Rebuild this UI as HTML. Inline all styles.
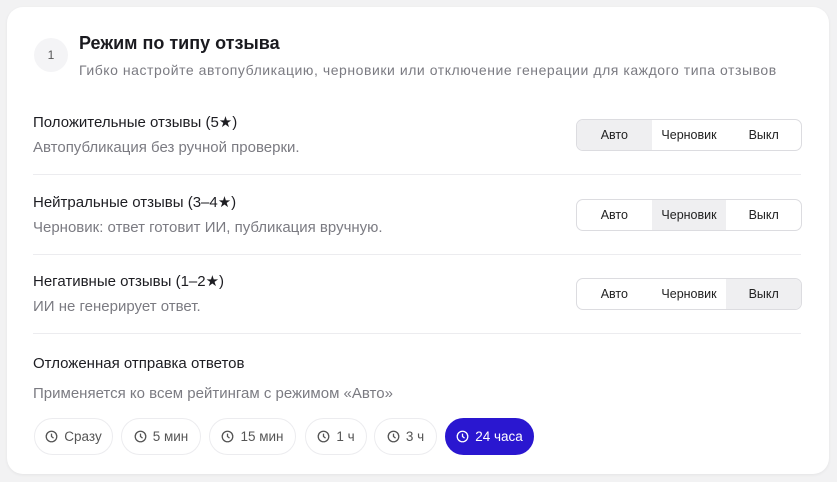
<!DOCTYPE html>
<html><head><meta charset="utf-8"><style>
*{margin:0;padding:0;box-sizing:border-box}
body{width:837px;height:482px;background:#f2f2f3;font-family:"Liberation Sans","DejaVu Sans",sans-serif;position:relative;overflow:hidden;color:#1d1d22}
.card{position:absolute;left:7px;top:7px;width:822px;height:467px;background:#fff;border-radius:16px;box-shadow:0 1px 3px rgba(0,0,0,.06)}
.a{position:absolute;white-space:nowrap}
.num{left:34px;top:38px;width:34px;height:34px;border-radius:50%;background:#f4f4f6;font-size:12px;color:#555;text-align:center;line-height:34px}
.t{font-size:18px;font-weight:bold;color:#1a1a1f;left:79px;top:33px}
.sub{font-size:14px;letter-spacing:0.55px;color:#7b7b82;left:79px;top:62px}
.h{font-size:15px;color:#1d1d22;left:33px}
.d{font-size:15px;color:#7b7b82;left:33px}
.line{position:absolute;left:33px;width:768px;height:1px;background:#ececef}
.seg{position:absolute;left:576px;width:226px;height:32px;border:1px solid #dcdce0;border-radius:7px;display:flex;overflow:hidden}
.seg div{flex:1;font-size:12.5px;text-align:center;line-height:30px;color:#222}
.seg .on{background:#efeff1}
.pill{position:absolute;top:418px;height:37px;border:1px solid #ececef;border-radius:19px;font-size:13.5px;color:#555;display:flex;align-items:center;justify-content:center;gap:6px}
.pill svg{width:13px;height:13px}
.pill.on{background:#2a17d0;border-color:#2a17d0;color:#fff}
</style></head><body>
<div class="card"></div>
<div class="a num">1</div>
<div class="a t">Режим по типу отзыва</div>
<div class="a sub">Гибко настройте автопубликацию, черновики или отключение генерации для каждого типа отзывов</div>

<div class="a h" style="top:113px">Положительные отзывы (5★)</div>
<div class="a d" style="top:139px">Автопубликация без ручной проверки.</div>
<div class="seg" style="top:119px"><div class="on">Авто</div><div>Черновик</div><div>Выкл</div></div>
<div class="line" style="top:174px"></div>

<div class="a h" style="top:193px">Нейтральные отзывы (3–4★)</div>
<div class="a d" style="top:219px">Черновик: ответ готовит ИИ, публикация вручную.</div>
<div class="seg" style="top:199px"><div>Авто</div><div class="on">Черновик</div><div>Выкл</div></div>
<div class="line" style="top:254px"></div>

<div class="a h" style="top:272px">Негативные отзывы (1–2★)</div>
<div class="a d" style="top:298px">ИИ не генерирует ответ.</div>
<div class="seg" style="top:278px"><div>Авто</div><div>Черновик</div><div class="on">Выкл</div></div>
<div class="line" style="top:333px"></div>

<div class="a h" style="top:355px">Отложенная отправка ответов</div>
<div class="a d" style="top:385px">Применяется ко всем рейтингам с режимом «Авто»</div>

<div class="pill" style="left:34px;width:79px"><svg viewBox="0 0 16 16" fill="none" stroke="currentColor" stroke-width="1.6"><circle cx="8" cy="8" r="6.5"/><path d="M8 4.5V8l2.5 2"/></svg>Сразу</div>
<div class="pill" style="left:121px;width:80px"><svg viewBox="0 0 16 16" fill="none" stroke="currentColor" stroke-width="1.6"><circle cx="8" cy="8" r="6.5"/><path d="M8 4.5V8l2.5 2"/></svg>5 мин</div>
<div class="pill" style="left:209px;width:87px"><svg viewBox="0 0 16 16" fill="none" stroke="currentColor" stroke-width="1.6"><circle cx="8" cy="8" r="6.5"/><path d="M8 4.5V8l2.5 2"/></svg>15 мин</div>
<div class="pill" style="left:305px;width:62px"><svg viewBox="0 0 16 16" fill="none" stroke="currentColor" stroke-width="1.6"><circle cx="8" cy="8" r="6.5"/><path d="M8 4.5V8l2.5 2"/></svg>1 ч</div>
<div class="pill" style="left:374px;width:63px"><svg viewBox="0 0 16 16" fill="none" stroke="currentColor" stroke-width="1.6"><circle cx="8" cy="8" r="6.5"/><path d="M8 4.5V8l2.5 2"/></svg>3 ч</div>
<div class="pill on" style="left:445px;width:89px"><svg viewBox="0 0 16 16" fill="none" stroke="currentColor" stroke-width="1.6"><circle cx="8" cy="8" r="6.5"/><path d="M8 4.5V8l2.5 2"/></svg>24 часа</div>
</body></html>
